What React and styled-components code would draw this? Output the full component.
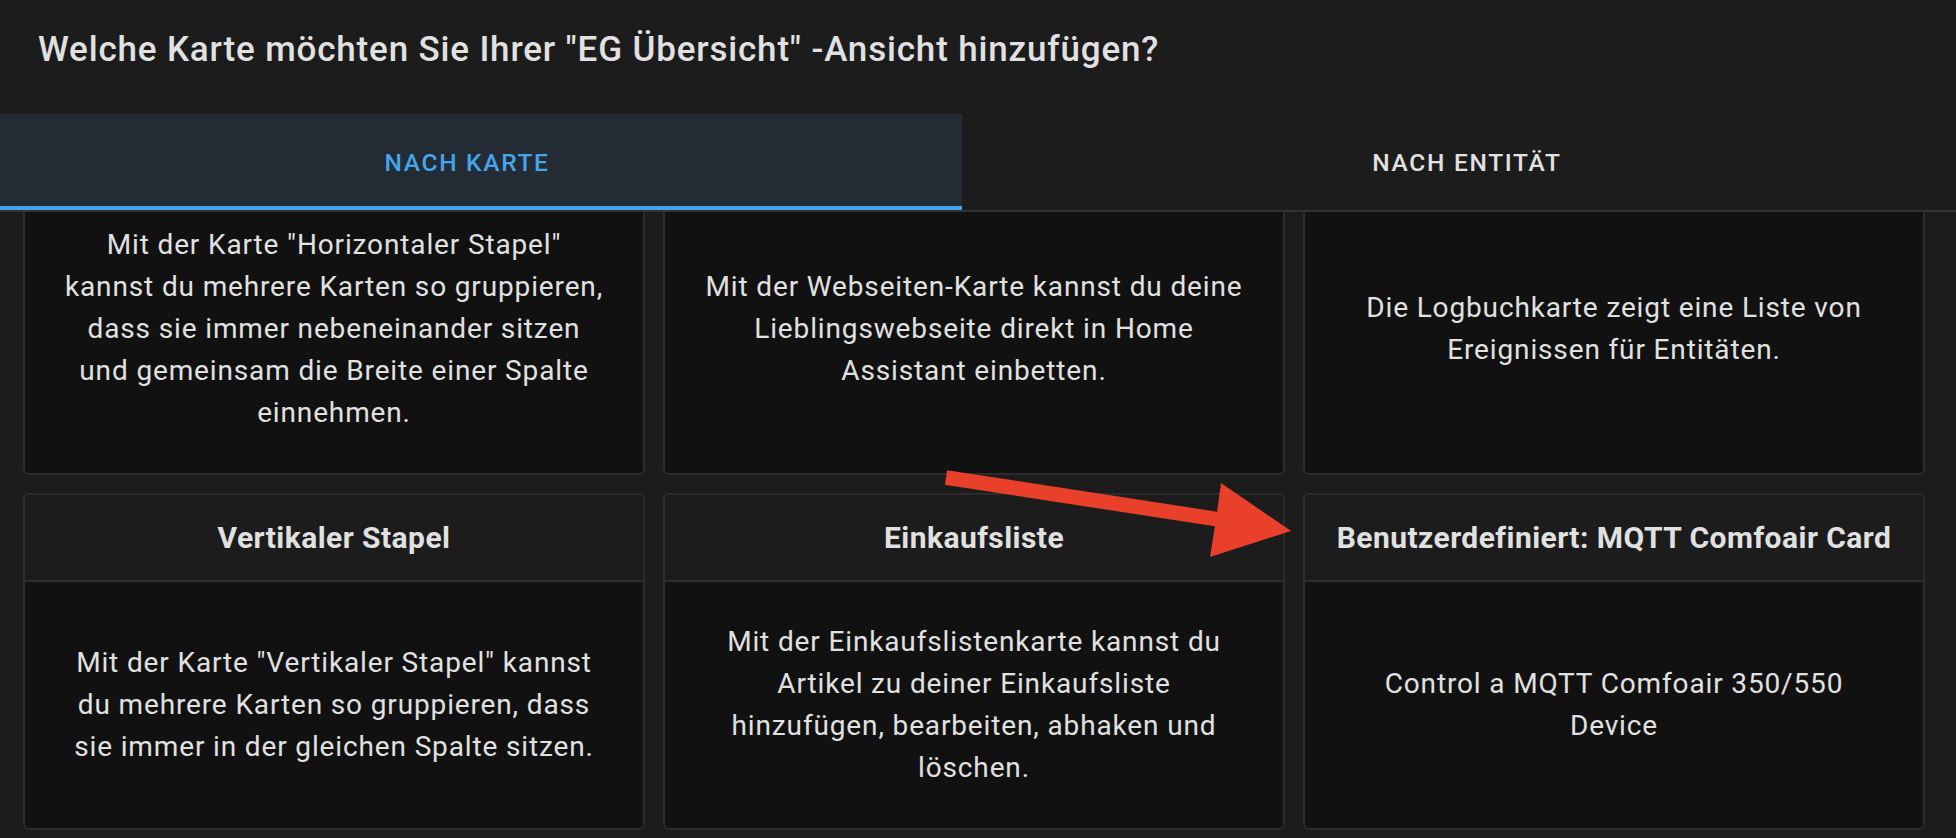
import React, { useLayoutEffect, useRef } from "react";
import styled, { createGlobalStyle } from "styled-components";

const GlobalStyle = createGlobalStyle`
  html, body { margin: 0; padding: 0; background: #1c1c1c; }
  body { font-family: Roboto, "Noto Sans", sans-serif; color: #e1e1e1; }
  * { box-sizing: border-box; }
`;

const Dialog = styled.div`
  position: relative;
  display: flex;
  flex-direction: column;
  width: 1956px;
  height: 838px;
  overflow: hidden;
  background: #1c1c1c;
`;

const Header = styled.header`
  height: 114px;
  flex: none;
  padding: 29px 0 0 38px;
`;

const Title = styled.h2`
  margin: 0;
  font-size: 35px;
  line-height: 42px;
  font-weight: 500;
  letter-spacing: 0.83px;
  color: #e1e1e1;
  white-space: nowrap;
`;

const TabBar = styled.nav`
  display: flex;
  height: 98px;
  border-bottom: 2px solid #333333;
  flex: none;
`;

const Tab = styled.div`
  display: flex;
  align-items: center;
  justify-content: center;
  width: ${(p) => p.$width || "auto"};
  flex: ${(p) => (p.$width ? "none" : "1")};
  padding: ${(p) => p.$pad};
  padding-top: 4px;
  background: ${(p) => (p.$active ? "#232b34" : "transparent")};
  border-bottom: 4px solid ${(p) => (p.$active ? "#45a5ea" : "transparent")};
  color: ${(p) => (p.$active ? "#45a5ea" : "#e1e1e1")};
  font-size: 24.5px;
  font-weight: 500;
  letter-spacing: 1.7px;
  text-transform: uppercase;
`;

const ScrollArea = styled.div`
  flex: 1;
  overflow-y: auto;
  scrollbar-width: none;
  &::-webkit-scrollbar { display: none; }
`;

const CardGrid = styled.div`
  display: grid;
  grid-template-columns: repeat(3, 1fr);
  gap: 18px;
  padding: 23px 31px 60px 23px;
`;

const Card = styled.div`
  display: flex;
  flex-direction: column;
  border: 2px solid #2c2c2c;
  border-radius: 6px;
  overflow: hidden;
  background: #111111;
`;

const CardHeader = styled.div`
  display: flex;
  align-items: center;
  justify-content: center;
  height: 87px;
  background: #1c1c1c;
  border-bottom: 2px solid #2f2f2f;
  font-size: 30px;
  font-weight: 700;
  letter-spacing: 0.45px;
  color: #e1e1e1;
  white-space: nowrap;
`;

const CardBody = styled.div`
  flex: 1;
  display: flex;
  align-items: center;
  justify-content: center;
  padding: 39px 20px;
  text-align: center;
  font-size: 28px;
  line-height: 42px;
  letter-spacing: 0.86px;
  color: #e1e1e1;
`;

const Line = styled.span`
  display: block;
  white-space: nowrap;
`;

const ArrowLayer = styled.svg`
  position: absolute;
  top: 0;
  left: 0;
  width: 1956px;
  height: 838px;
  pointer-events: none;
`;

const cards = [
  {
    title: "Horizontaler Stapel",
    lines: [
      'Mit der Karte "Horizontaler Stapel"',
      "kannst du mehrere Karten so gruppieren,",
      "dass sie immer nebeneinander sitzen",
      "und gemeinsam die Breite einer Spalte",
      "einnehmen.",
    ],
  },
  {
    title: "Webseite",
    lines: [
      "Mit der Webseiten-Karte kannst du deine",
      "Lieblingswebseite direkt in Home",
      "Assistant einbetten.",
    ],
  },
  {
    title: "Logbuch",
    lines: ["Die Logbuchkarte zeigt eine Liste von", "Ereignissen für Entitäten."],
  },
  {
    title: "Vertikaler Stapel",
    lines: [
      'Mit der Karte "Vertikaler Stapel" kannst',
      "du mehrere Karten so gruppieren, dass",
      "sie immer in der gleichen Spalte sitzen.",
    ],
  },
  {
    title: "Einkaufsliste",
    lines: [
      "Mit der Einkaufslistenkarte kannst du",
      "Artikel zu deiner Einkaufsliste",
      "hinzufügen, bearbeiten, abhaken und",
      "löschen.",
    ],
  },
  {
    title: "Benutzerdefiniert: MQTT Comfoair Card",
    lines: ["Control a MQTT Comfoair 350/550", "Device"],
  },
];

export default function App() {
  const scrollRef = useRef(null);

  useLayoutEffect(() => {
    if (scrollRef.current) scrollRef.current.scrollTop = 139;
  }, []);

  return (
    <>
      <GlobalStyle />
      <Dialog>
        <Header>
          <Title>Welche Karte möchten Sie Ihrer "EG Übersicht" -Ansicht hinzufügen?</Title>
        </Header>
        <TabBar>
          <Tab $active $width="962px" $pad="0 28px 0 0">Nach Karte</Tab>
          <Tab $pad="0 0 0 16px">Nach Entität</Tab>
        </TabBar>
        <ScrollArea ref={scrollRef}>
          <CardGrid>
            {cards.map((c) => (
              <Card key={c.title}>
                <CardHeader>{c.title}</CardHeader>
                <CardBody>
                  <div>
                    {c.lines.map((l) => (
                      <Line key={l}>{l}</Line>
                    ))}
                  </div>
                </CardBody>
              </Card>
            ))}
          </CardGrid>
        </ScrollArea>
        <ArrowLayer viewBox="0 0 1956 838">
          <polygon
            fill="#e8402a"
            points="947.1,470.2 1217.1,511.7 1221,483 1291,531 1210,557 1214.9,526.3 944.9,484.8"
          />
        </ArrowLayer>
      </Dialog>
    </>
  );
}
